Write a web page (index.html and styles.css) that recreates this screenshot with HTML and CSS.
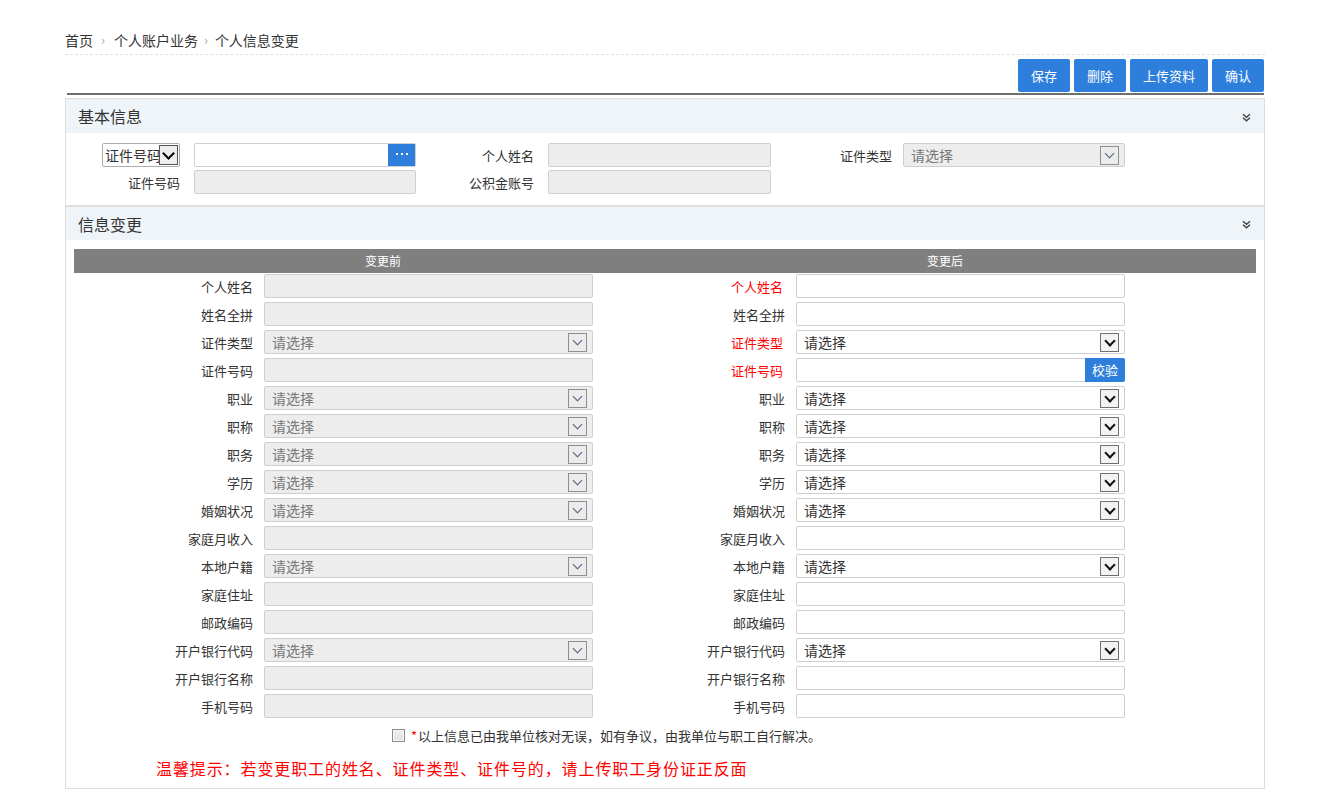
FILE: index.html
```html
<!DOCTYPE html>
<html lang="zh-CN">
<head>
<meta charset="utf-8">
<title>个人信息变更</title>
<link rel="stylesheet" href="styles.css">
</head>
<body>
<div class="page">
  <div class="crumb">
    <span>首页</span><span class="sep sep1">›</span><span>个人账户业务</span><span class="sep">›</span><span>个人信息变更</span>
  </div>
  <div class="toolbar">
    <button class="btn">保存</button>
    <button class="btn">删除</button>
    <button class="btn">上传资料</button>
    <button class="btn">确认</button>
  </div>
  <div class="panel">
    <div class="ph">
      <span>基本信息</span>
      <svg class="dbl" width="9" height="9" viewBox="0 0 9 9"><path d="M1 1.2l3.5 3 3.5-3M1 4.8l3.5 3 3.5-3" fill="none" stroke="#444" stroke-width="1.5"/></svg>
    </div>
    <div class="basic">
      <div class="lab"><div class="nsel"><span class="ntext">证件号码</span><span class="narr"></span></div></div>
      <div class="inp withbtn"><span class="dots"><svg width="12" height="3" viewBox="0 0 12 3"><rect x="0" y="0" width="2" height="2" fill="#fff"/><rect x="5" y="0" width="2" height="2" fill="#fff"/><rect x="10" y="0" width="2" height="2" fill="#fff"/></svg></span></div>
      <div class="lab">个人姓名</div>
      <div class="inp dis"></div>
      <div class="lab">证件类型</div>
      <div class="inp dis sel"><span>请选择</span><span class="arr"></span></div>
      <div class="lab">证件号码</div>
      <div class="inp dis"></div>
      <div class="lab">公积金账号</div>
      <div class="inp dis"></div>
    </div>
    <div class="ph ph2">
      <span>信息变更</span>
      <svg class="dbl" width="9" height="9" viewBox="0 0 9 9"><path d="M1 1.2l3.5 3 3.5-3M1 4.8l3.5 3 3.5-3" fill="none" stroke="#444" stroke-width="1.5"/></svg>
    </div>
    <div class="change">
      <div class="thead"><div class="th1">变更前</div><div class="th2">变更后</div></div>
      <div class="rows">
        <div class="lab">个人姓名</div><div class="inp dis"></div>
        <div class="lab red">个人姓名</div><div class="inp"></div>

        <div class="lab">姓名全拼</div><div class="inp dis"></div>
        <div class="lab">姓名全拼</div><div class="inp"></div>

        <div class="lab">证件类型</div><div class="inp dis sel"><span>请选择</span><span class="arr"></span></div>
        <div class="lab red">证件类型</div><div class="inp sel"><span>请选择</span><span class="arr"></span></div>

        <div class="lab">证件号码</div><div class="inp dis"></div>
        <div class="lab red">证件号码</div><div class="inp chk"><span class="verify">校验</span></div>

        <div class="lab">职业</div><div class="inp dis sel"><span>请选择</span><span class="arr"></span></div>
        <div class="lab">职业</div><div class="inp sel"><span>请选择</span><span class="arr"></span></div>

        <div class="lab">职称</div><div class="inp dis sel"><span>请选择</span><span class="arr"></span></div>
        <div class="lab">职称</div><div class="inp sel"><span>请选择</span><span class="arr"></span></div>

        <div class="lab">职务</div><div class="inp dis sel"><span>请选择</span><span class="arr"></span></div>
        <div class="lab">职务</div><div class="inp sel"><span>请选择</span><span class="arr"></span></div>

        <div class="lab">学历</div><div class="inp dis sel"><span>请选择</span><span class="arr"></span></div>
        <div class="lab">学历</div><div class="inp sel"><span>请选择</span><span class="arr"></span></div>

        <div class="lab">婚姻状况</div><div class="inp dis sel"><span>请选择</span><span class="arr"></span></div>
        <div class="lab">婚姻状况</div><div class="inp sel"><span>请选择</span><span class="arr"></span></div>

        <div class="lab">家庭月收入</div><div class="inp dis"></div>
        <div class="lab">家庭月收入</div><div class="inp"></div>

        <div class="lab">本地户籍</div><div class="inp dis sel"><span>请选择</span><span class="arr"></span></div>
        <div class="lab">本地户籍</div><div class="inp sel"><span>请选择</span><span class="arr"></span></div>

        <div class="lab">家庭住址</div><div class="inp dis"></div>
        <div class="lab">家庭住址</div><div class="inp"></div>

        <div class="lab">邮政编码</div><div class="inp dis"></div>
        <div class="lab">邮政编码</div><div class="inp"></div>

        <div class="lab">开户银行代码</div><div class="inp dis sel"><span>请选择</span><span class="arr"></span></div>
        <div class="lab">开户银行代码</div><div class="inp sel"><span>请选择</span><span class="arr"></span></div>

        <div class="lab">开户银行名称</div><div class="inp dis"></div>
        <div class="lab">开户银行名称</div><div class="inp"></div>

        <div class="lab">手机号码</div><div class="inp dis"></div>
        <div class="lab">手机号码</div><div class="inp"></div>
      </div>
      <div class="confirm">
        <span class="cbox"></span><span class="star">*</span><span>以上信息已由我单位核对无误，如有争议，由我单位与职工自行解决。</span>
      </div>
      <div class="tip">温馨提示：若变更职工的姓名、证件类型、证件号的，请上传职工身份证正反面</div>
    </div>
  </div>
</div>
</body>
</html>
```
FILE: styles.css
```css
* { box-sizing: border-box; }
html, body { margin: 0; padding: 0; background: #fff; }
body {
  font-family: "Noto Sans CJK SC", "Noto Sans", "Liberation Sans", sans-serif;
  font-size: 13px;
  color: #333;
}
.page {
  width: 1200px;
  margin-left: 65px;
}
.crumb {
  padding-top: 30px;
  padding-bottom: 4px;
  line-height: 20px;
  font-size: 14px;
  color: #333;
  border-bottom: 1px dashed #e2e2e2;
  display: flex;
  align-items: center;
}
.crumb .sep {
  color: #aaa;
  font-size: 13px;
  margin: 0 7px 0 6px;
}
.crumb .sep1 { margin: 0 9px 0 8px; }
.toolbar {
  display: flex;
  justify-content: flex-end;
  gap: 4px;
  margin: 4px 1px 0 2px;
  padding-bottom: 1px;
  border-bottom: 2px solid #6e6e6e;
}
.btn {
  height: 33px;
  padding: 0 13px;
  border: none;
  border-radius: 2px;
  background: #2e7fdc;
  color: #fff;
  font-family: inherit;
  font-size: 13px;
  line-height: 33px;
}
.panel {
  margin-top: 3px;
  border: 1px solid #dedede;
}
.ph {
  height: 34px;
  background: #eff4f9;
  display: flex;
  align-items: center;
  justify-content: space-between;
  padding: 0 13px 0 12px;
  font-size: 16px;
  color: #333;
}
.ph2 {
  border-top: 2px solid #dedede;
  height: 35px;
}
.dbl { display: block; margin-top: 2px; }

.basic {
  display: grid;
  grid-template-columns: 128px 222px 132px 223px 132px 222px;
  grid-auto-rows: 24px;
  row-gap: 3px;
  padding: 10px 0 11px;
}
.lab {
  display: flex;
  align-items: center;
  justify-content: flex-end;
  white-space: nowrap;
  font-size: 13px;
  color: #333;
}
.basic .lab { padding-right: 14px; }
.basic .lab:nth-child(5) { padding-right: 11px; }

.inp {
  position: relative;
  height: 24px;
  border: 1px solid #cfcfcf;
  border-radius: 2px;
  background: #fff;
  display: flex;
  align-items: center;
  padding-left: 7px;
  font-size: 14px;
  color: #333;
}
.inp.dis { background: #ededed; color: #777; }
.sel .arr {
  position: absolute;
  right: 5px;
  top: 2px;
  width: 19px;
  height: 19px;
  border: 1px solid #707070;
  background: #f3f3f3;
  display: flex;
  align-items: center;
  justify-content: center;
}
.sel .arr::after {
  content: "";
  width: 6px;
  height: 6px;
  border-right: 2px solid #111;
  border-bottom: 2px solid #111;
  transform: translateY(-2px) rotate(45deg);
}
.dis.sel .arr { border-color: #8f8f8f; background: #ececec; }
.dis.sel .arr::after { border-color: #4e5d7e; border-width: 0 1.6px 1.6px 0; }

.nsel {
  width: 78px;
  height: 24px;
  border: 1px solid #ababab;
  border-radius: 2px;
  position: relative;
  display: flex;
  align-items: center;
  overflow: hidden;
  background: #fff;
}
.ntext {
  font-size: 14px;
  color: #333;
  padding-left: 2px;
  width: 60px;
  overflow: hidden;
  white-space: nowrap;
}
.narr {
  position: absolute;
  right: 1px;
  top: 1px;
  width: 19px;
  height: 20px;
  border: 1px solid #555;
  background: #eeeeee;
  display: flex;
  align-items: center;
  justify-content: center;
}
.narr::after {
  content: "";
  width: 7px;
  height: 7px;
  border-right: 2px solid #000;
  border-bottom: 2px solid #000;
  transform: translateY(-2px) rotate(45deg);
}
.withbtn .dots {
  position: absolute;
  right: 0;
  top: 0;
  width: 27px;
  height: 22px;
  background: #2e7fdc;
  display: flex;
  align-items: center;
  justify-content: center;
}
.dots svg { display: block; margin-top: -2px; }

.change { padding: 9px 8px 10px 8px; }
.thead {
  display: flex;
  height: 24px;
  background: #7f7f7f;
  color: #fff;
  font-size: 12px;
  line-height: 24px;
}
.th1 { width: 618px; text-align: center; }
.th2 { width: 506px; text-align: center; }
.rows {
  display: grid;
  grid-template-columns: 190px 329px 203px 329px;
  grid-auto-rows: 24px;
  row-gap: 4px;
  padding-top: 1px;
}
.rows .lab { padding-right: 11px; }
.rows .lab.red { color: #f00; padding-right: 13px; }
.chk .verify {
  position: absolute;
  right: -1px;
  top: -1px;
  width: 40px;
  height: 24px;
  background: #2e7fdc;
  color: #fff;
  font-size: 13px;
  line-height: 24px;
  text-align: center;
  border-radius: 0 2px 2px 0;
}
.confirm {
  margin-top: 7px;
  height: 20px;
  display: flex;
  align-items: center;
  padding-left: 318px;
  font-size: 13px;
  color: #333;
}
.cbox {
  width: 13px;
  height: 13px;
  border: 1px solid #8a8a8a;
  background: linear-gradient(#eee, #e2e2e2);
  box-shadow: inset 0 0 0 1px #f8f8f8;
  margin-right: 6px;
}
.star { color: #f00; margin-right: 1px; }
.tip {
  margin-top: 13px;
  line-height: 20px;
  height: 20px;
  padding-left: 82px;
  font-size: 16px;
  letter-spacing: 0.9px;
  color: #f00;
  white-space: nowrap;
}
```
